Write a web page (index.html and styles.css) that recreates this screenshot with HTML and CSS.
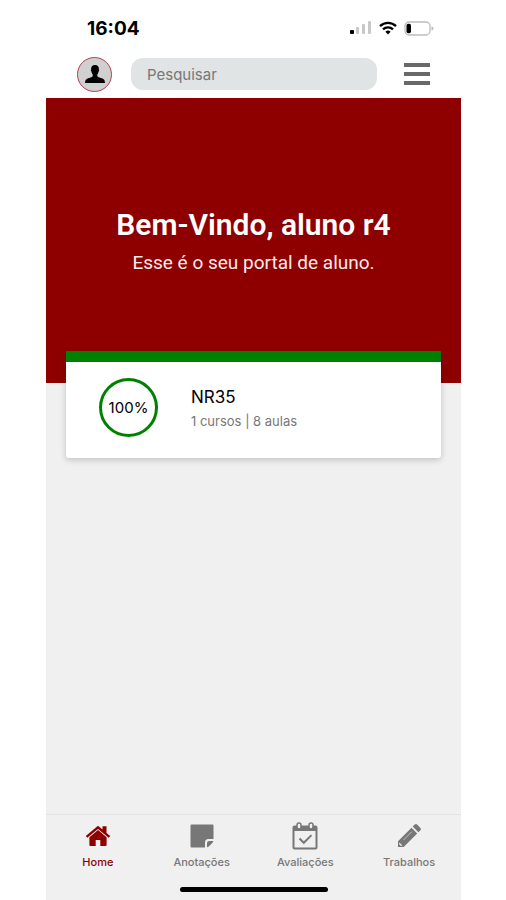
FILE: index.html
```
<!DOCTYPE html>
<html lang="pt-BR">
<head>
  <meta charset="UTF-8" />
  <meta name="viewport" content="width=device-width, initial-scale=1.0"/>
  <title>Portal do Aluno</title>
  <link rel="stylesheet" href="styles.css">
</head>
<body>
  <div class="phone">
    <div class="status">
      <span class="time">16:04</span>
      <div class="status-icons">
        <svg width="22" height="14" viewBox="0 0 22 14">
          <rect x="0" y="9" width="4" height="4" rx="1" fill="#000"/>
          <rect x="6" y="6" width="3" height="7" rx="1" fill="#c8c8c8"/>
          <rect x="12" y="3" width="3" height="10" rx="1" fill="#c8c8c8"/>
          <rect x="18" y="0" width="3" height="13" rx="1" fill="#c8c8c8"/>
        </svg>
        <svg width="18" height="14" viewBox="0 0 18 14" fill="none" stroke="#000" stroke-width="2.3">
          <path d="M1 5.1a11.5 11.5 0 0 1 16 0"/>
          <path d="M4 8.4a7.2 7.2 0 0 1 10 0"/>
          <path d="M9 13.4L6.4 10.8a3.7 3.7 0 0 1 5.2 0z" fill="#000" stroke="none"/>
        </svg>
        <svg width="30" height="15" viewBox="0 0 30 15">
          <rect x="1" y="1" width="25" height="13" rx="4" fill="#fff" stroke="#bdbdbd" stroke-width="1.3"/>
          <rect x="2.5" y="2.7" width="4.5" height="9.6" rx="1.8" fill="#000"/>
          <path d="M27.5 5.3v4.4q2-.6 2-2.2t-2-2.2z" fill="#bdbdbd"/>
        </svg>
      </div>
    </div>

    <header class="topbar">
      <button class="avatar" aria-label="Perfil">
        <svg width="20" height="18" viewBox="0 0 20 18">
          <path d="M10 0c2.800 0 4 1.800 3.900 4.400.5.300.3 1.800-.3 2.200-.2 1.300-.7 2.200-1.300 2.800v1.800c.8 1.200 3.100 1.400 5.200 2.300 1.800.8 2.300 2 2.500 4.500H0c.2-2.500.7-3.700 2.500-4.500 2.100-.9 4.400-1.100 5.200-2.300V9.400C7.100 8.800 6.600 7.900 6.400 6.600c-.6-.4-.8-1.900-.3-2.200C6 1.800 7.200 0 10 0z"/>
        </svg>
      </button>
      <input class="search" type="text" placeholder="Pesquisar" aria-label="Pesquisar">
      <button class="menu" aria-label="Menu">
        <span></span>
        <span></span>
        <span></span>
      </button>
    </header>

    <section class="hero">
      <h1>Bem-Vindo, aluno r4</h1>
      <p>Esse é o seu portal de aluno.</p>
    </section>

    <main>
      <a class="card" href="#">
        <div class="progress">100%</div>
        <div>
          <h2>NR35</h2>
          <p>1 cursos | 8 aulas</p>
        </div>
      </a>
    </main>

    <nav class="tabs">
      <a class="active" href="#">
        <svg width="26" height="26" viewBox="0 0 26 26" fill="currentColor">
          <path d="M13 2.800L.8 13l1.500 1.800L13 5.900l10.700 8.900 1.500-1.800-3.700-3.100V3.300h-4v3.300z"/>
          <path d="M13 7.100l-8.600 7.100V22q0 .9.900.9h5.400v-5.900h4.600v5.900h5.400q.9 0 .9-.9v-7.800z"/>
        </svg>
        Home
      </a>
      <a href="#">
        <svg width="26" height="26" viewBox="0 0 26 26" fill="currentColor">
          <path d="M2.500 1.500h21q1 0 1 1V16h-5q-3.500 0-3.500 3.500v5H2.500q-1 0-1-1v-21q0-1 1-1z"/>
          <path d="M18 24.300v-4q0-2.300 2.300-2.300h4.100q-.3 1.200-1.100 2l-3.300 3.300q-.8.800-2 1z"/>
        </svg>
        Anotações
      </a>
      <a href="#">
        <svg width="26" height="28" viewBox="0 0 26 28" fill="none" stroke="currentColor">
          <rect x="1.500" y="4.500" width="23" height="22" rx="1" stroke-width="2"/>
          <path d="M1 4h24v5H1z" fill="currentColor" stroke="none"/>
          <rect x="5" y="1" width="4" height="6" rx="2" fill="#f0f0f0" stroke-width="1.500"/>
          <rect x="17" y="1" width="4" height="6" rx="2" fill="#f0f0f0" stroke-width="1.500"/>
          <path d="M7.500 16.500l4.300 4.300 7.700-7.700" stroke-width="2"/>
        </svg>
        Avaliações
      </a>
      <a href="#">
        <svg width="26" height="26" viewBox="0 0 26 26" fill="currentColor">
          <path d="M15.500 4.800l5.700 5.700L7.700 24H2v-5.700z"/>
          <path d="M16.700 3.600l2-2q1.200-1.200 2.400 0l3.300 3.300q1.200 1.200 0 2.400l-2 2z"/>
          <path d="M7.500 17L15.800 8.700" stroke="#f0f0f0" stroke-width=".6"/>
          <path d="M3.400 19.600l3 3-1.500.400-1.900-1.900z" fill="#f0f0f0"/>
        </svg>
        Trabalhos
      </a>
    </nav>
    <div class="home-bar"></div>
  </div>
</body>
</html>
```
FILE: styles.css
```
* {
  margin: 0;
  padding: 0;
  box-sizing: border-box;
}

body {
  background-color: white;
  padding: 0 45px 0 46px;
  font-family: Inter, "Liberation Sans", sans-serif;
}

.phone {
  display: flex;
  flex-direction: column;
  min-height: 100vh;
  background-color: #f0f0f0;
}

.status {
  display: flex;
  justify-content: space-between;
  align-items: center;
  height: 56px;
  padding: 0 27px 0 41px;
  background-color: white;
}

.time {
  font-size: 19px;
  font-weight: 700;
}

.status-icons {
  display: flex;
  align-items: center;
  gap: 7px;
}

.topbar {
  display: flex;
  align-items: center;
  height: 42px;
  padding: 0 31px 6px;
  background-color: white;
}

button {
  border: none;
  cursor: pointer;
}

.avatar {
  display: flex;
  align-items: center;
  justify-content: center;
  width: 35px;
  height: 35px;
  border: 1px solid #b5404d;
  border-radius: 50%;
  background-color: #d0d0d0;
}

.search {
  flex: 1;
  min-width: 0;
  height: 32px;
  margin: 0 27px 0 19px;
  padding: 0 16px;
  border: none;
  border-radius: 12px;
  background-color: #e0e4e4;
  font-family: inherit;
  font-size: 15px;
}

.search::placeholder {
  color: #777;
}

.menu {
  display: flex;
  flex-direction: column;
  gap: 5px;
  width: 26px;
  background-color: transparent;
}

.menu span {
  height: 4px;
  background-color: #696969;
}

.hero {
  height: 285px;
  padding-top: 108px;
  background-color: #8e0000;
  color: white;
  font-family: Roboto, "Liberation Sans", sans-serif;
  text-align: center;
}

.hero h1 {
  font-size: 30px;
  font-weight: 600;
  line-height: 38px;
}

.hero p {
  font-size: 19px;
  line-height: 38px;
  color: #ffeaea;
}

main {
  flex: 1;
  padding: 0 20px;
}

.card {
  display: flex;
  align-items: center;
  gap: 33px;
  height: 107px;
  margin-top: -32px;
  padding: 0 33px 6px;
  border-top: 11px solid #008000;
  border-radius: 0 0 3px 3px;
  background-color: white;
  box-shadow: 0 2px 6px rgba(0, 0, 0, 0.2);
  color: black;
  text-decoration: none;
}

.progress {
  display: flex;
  align-items: center;
  justify-content: center;
  width: 59px;
  height: 59px;
  border: 3px solid #008000;
  border-radius: 50%;
  font-size: 15px;
}

.card h2 {
  padding-top: 3px;
  font-size: 17px;
  font-weight: 400;
  line-height: 24px;
}

.card p {
  font-size: 13px;
  line-height: 24px;
  color: #777;
}

.tabs {
  display: grid;
  grid-template-columns: repeat(4, 1fr);
  height: 73px;
  border-top: 1px solid #e3e3e3;
}

.tabs a {
  display: flex;
  flex-direction: column;
  align-items: center;
  gap: 5px;
  padding-top: 7px;
  font-size: 11px;
  font-weight: 500;
  line-height: 14px;
  color: #777;
  text-decoration: none;
}

.tabs svg {
  height: 28px;
}

.tabs .active {
  color: #8e0000;
}

.home-bar {
  width: 148px;
  height: 5px;
  margin: 0 auto 8px;
  border-radius: 3px;
  background-color: black;
}
```
